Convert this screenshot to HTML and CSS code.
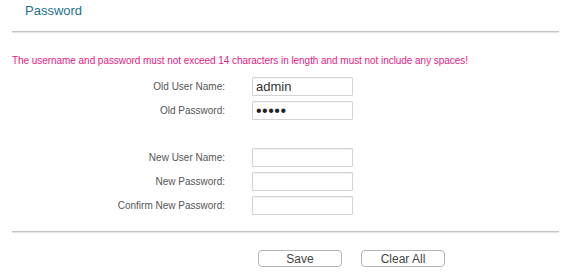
FILE: index.html
```html
<!DOCTYPE html>
<html lang="en">
<head>
    <meta charset="UTF-8">
    <title>Password</title>
    <link rel="stylesheet" href="styles.css">
</head>
<body>
    <div class="panel">
        <h1 class="title">Password</h1>
        <div class="rule"></div>

        <p class="notice">The username and password must not exceed 14 characters in length and must not include any spaces!</p>

        <div class="form old">
            <label class="label">Old User Name:</label>
            <input class="field" type="text" value="admin">
            <label class="label">Old Password:</label>
            <input class="field secret" type="password" value="admin">
        </div>

        <div class="form new">
            <label class="label">New User Name:</label>
            <input class="field" type="text">
            <label class="label">New Password:</label>
            <input class="field" type="password">
            <label class="label">Confirm New Password:</label>
            <input class="field" type="password">
        </div>

        <div class="rule"></div>

        <div class="actions">
            <button class="btn" type="button">Save</button>
            <button class="btn" type="button">Clear All</button>
        </div>
    </div>
</body>
</html>
```

FILE: styles.css
```css
body {
    margin: 0;
    background: #fff;
    font-family: "Liberation Sans", Arial, sans-serif;
    color: #555;
}

.panel {
    width: 547px;
    padding-left: 12px;
}

.title {
    margin: 0;
    padding: 3px 0 0 13px;
    height: 31px;
    box-sizing: border-box;
    font-size: 13px;
    font-weight: normal;
    color: #25708f;
}

.rule {
    height: 2px;
    background: linear-gradient(#c4c4c4 50%, #e4e4e4 50%);
}

.notice {
    margin: 21px 0 0;
    height: 17px;
    font-size: 10px;
    line-height: 14px;
    letter-spacing: -0.05px;
    color: #e5217f;
}

.form {
    display: grid;
    grid-template-columns: 213px 101px;
    column-gap: 27px;
    align-items: center;
}

.old {
    margin-top: 6px;
    row-gap: 5px;
}

.new {
    margin-top: 28px;
    row-gap: 5px;
    margin-bottom: 16px;
}

.label {
    text-align: right;
    font-size: 10px;
}

.field {
    box-sizing: border-box;
    width: 101px;
    height: 19px;
    margin: 0;
    padding: 0 3px;
    border: 1px solid #d4d4d4;
    border-radius: 1px;
    background: #fff;
    font-family: "Liberation Sans", Arial, sans-serif;
    font-size: 13px;
    color: #333;
    box-shadow: inset 0 1px 1px #f0f0f0;
}

.secret {
    font-size: 16px;
    letter-spacing: 0.5px;
    color: #222;
}

.actions {
    display: flex;
    gap: 19px;
    padding: 17px 0 0 246px;
}

.btn {
    width: 84px;
    height: 17px;
    padding: 0;
    border: 1px solid #b4b4b4;
    border-radius: 4px;
    background: #fff;
    font-family: "Liberation Sans", Arial, sans-serif;
    font-size: 12px;
    color: #444;
}
```
